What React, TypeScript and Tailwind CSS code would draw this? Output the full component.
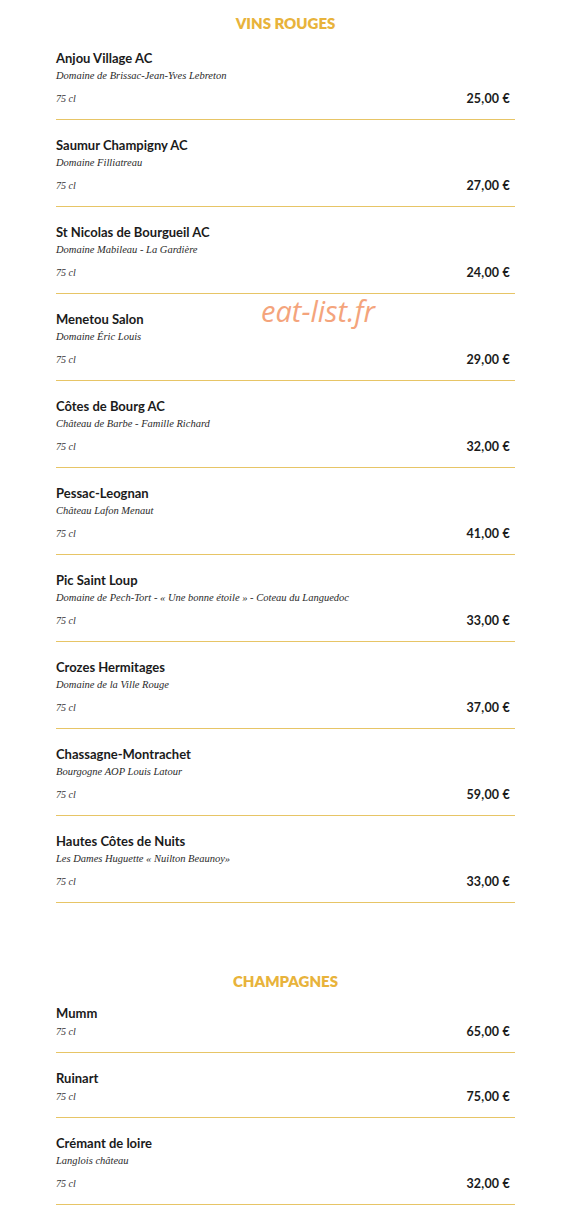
import React from 'react';

type Wine = { name: string; domain?: string; size: string; price: string };

const reds: Wine[] = [
  { name: 'Anjou Village AC', domain: 'Domaine de Brissac-Jean-Yves Lebreton', size: '75 cl', price: '25,00 €' },
  { name: 'Saumur Champigny AC', domain: 'Domaine Filliatreau', size: '75 cl', price: '27,00 €' },
  { name: 'St Nicolas de Bourgueil AC', domain: 'Domaine Mabileau - La Gardière', size: '75 cl', price: '24,00 €' },
  { name: 'Menetou Salon', domain: 'Domaine Éric Louis', size: '75 cl', price: '29,00 €' },
  { name: 'Côtes de Bourg AC', domain: 'Château de Barbe - Famille Richard', size: '75 cl', price: '32,00 €' },
  { name: 'Pessac-Leognan', domain: 'Château Lafon Menaut', size: '75 cl', price: '41,00 €' },
  { name: 'Pic Saint Loup', domain: 'Domaine de Pech-Tort - « Une bonne étoile » - Coteau du Languedoc', size: '75 cl', price: '33,00 €' },
  { name: 'Crozes Hermitages', domain: 'Domaine de la Ville Rouge', size: '75 cl', price: '37,00 €' },
  { name: 'Chassagne-Montrachet', domain: 'Bourgogne AOP Louis Latour', size: '75 cl', price: '59,00 €' },
  { name: 'Hautes Côtes de Nuits', domain: 'Les Dames Huguette « Nuilton Beaunoy»', size: '75 cl', price: '33,00 €' },
];

const champagnes: Wine[] = [
  { name: 'Mumm', size: '75 cl', price: '65,00 €' },
  { name: 'Ruinart', size: '75 cl', price: '75,00 €' },
  { name: 'Crémant de loire', domain: 'Langlois château', size: '75 cl', price: '32,00 €' },
];

const sans = "font-['Lato','Open_Sans',sans-serif]";
const serif = "font-['Liberation_Serif','DejaVu_Serif',serif]";

const WineRow: React.FC<{ wine: Wine }> = ({ wine }) => (
  <div className="pt-[15px] pb-[11px] border-b border-[#e7c566]">
    <h3 className={`${sans} text-[13px] leading-5 font-bold text-[#1b1b1b]`}>{wine.name}</h3>
    {wine.domain && (
      <p className={`${serif} italic text-[10.5px] leading-4 text-[#2a2a2a]`}>{wine.domain}</p>
    )}
    <div className={`flex items-center justify-between leading-[18px] ${wine.domain ? 'mt-1.5' : ''}`}>
      <span className={`${serif} italic text-[10px] text-[#333]`}>{wine.size}</span>
      <span className={`${sans} text-[12.5px] font-bold tracking-[0.2px] text-[#1b1b1b] pr-[5px]`}>{wine.price}</span>
    </div>
  </div>
);

const Section: React.FC<{ title: string; wines: Wine[]; tight?: boolean }> = ({ title, wines, tight }) => (
  <section>
    <h2 className={`${sans} text-center text-[15px] leading-5 font-extrabold text-[#e8b33b] ${tight ? '-mb-[3px]' : ''}`}>
      {title}
    </h2>
    <div>
      {wines.map((w) => (
        <WineRow key={w.name} wine={w} />
      ))}
    </div>
  </section>
);

export default function App() {
  return (
    <div className="relative w-[562px] min-h-[1230px] bg-white">
      <div className="pl-[56px] pr-[47px] pt-[13px]">
        <Section title="VINS ROUGES" wines={reds} />
        <div className="mt-[68px]">
          <Section title="CHAMPAGNES" wines={champagnes} tight />
        </div>
      </div>
      {/* watermark */}
      <div className="absolute left-[261px] top-[292px] font-['Open_Sans',sans-serif] italic text-[29px] leading-[38px] text-[#f4a47c]">
        eat-list.fr
      </div>
    </div>
  );
}
